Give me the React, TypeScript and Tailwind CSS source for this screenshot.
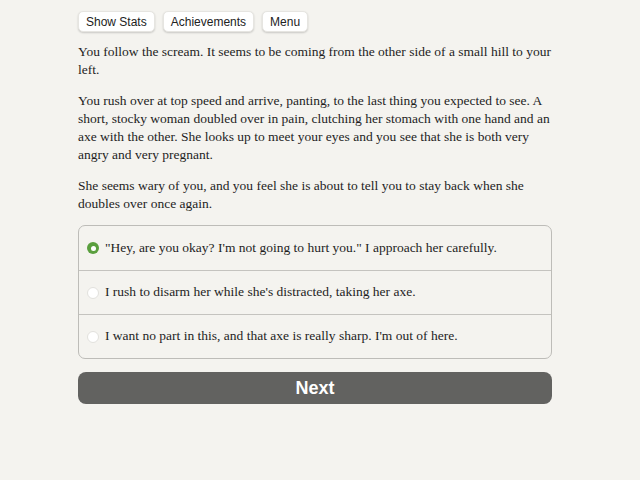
import { useState } from 'react';

const opciones = [
  '"Hey, are you okay? I\'m not going to hurt you." I approach her carefully.',
  "I rush to disarm her while she's distracted, taking her axe.",
  "I want no part in this, and that axe is really sharp. I'm out of here.",
];

const serif = "font-['Liberation_Serif','DejaVu_Serif',serif]";
const sans = "font-['Liberation_Sans',Arial,sans-serif]";

function BotonBarra({ children }: { children: React.ReactNode }) {
  return (
    <button
      className={`${sans} h-[21px] px-[7px] text-[12px] text-[#222] bg-white rounded-[5px] shadow-[0_1px_2px_rgba(0,0,0,0.18)] border border-[#e6e5e1]`}
    >
      {children}
    </button>
  );
}

export default function App() {
  const [elegida, setElegida] = useState(0);

  return (
    <div className="min-h-[480px] w-full bg-[#f4f3ef] text-[#1e1e1e]">
      <div className="pl-[78px] w-[552px] pt-[11px]">
        <div className="flex gap-[8px]">
          <BotonBarra>Show Stats</BotonBarra>
          <BotonBarra>Achievements</BotonBarra>
          <BotonBarra>Menu</BotonBarra>
        </div>

        <div className={`${serif} text-[13.5px] leading-[18px] mt-[11px] whitespace-nowrap`}>
          <p>
            You follow the scream. It seems to be coming from the other side of a small hill to your
            <br />
            left.
          </p>
          <p className="mt-[13px]">
            You rush over at top speed and arrive, panting, to the last thing you expected to see. A
            <br />
            short, stocky woman doubled over in pain, clutching her stomach with one hand and an
            <br />
            axe with the other. She looks up to meet your eyes and you see that she is both very
            <br />
            angry and very pregnant.
          </p>
          <p className="mt-[13px]">
            She seems wary of you, and you feel she is about to tell you to stay back when she
            <br />
            doubles over once again.
          </p>
        </div>

        <div className="mt-[12px] border border-[#bdbcb8] rounded-[7px] overflow-hidden">
          {opciones.map((texto, i) => (
            <label
              key={i}
              onClick={() => setElegida(i)}
              className={`flex items-center h-[44px] pl-[8px] gap-[6px] cursor-pointer ${
                i > 0 ? 'border-t border-[#c4c3bf]' : ''
              }`}
            >
              {elegida === i ? (
                <span className="w-[12px] h-[12px] rounded-full bg-[#5a9f3e] flex items-center justify-center">
                  <span className="w-[5px] h-[5px] rounded-full bg-white" />
                </span>
              ) : (
                <span className="w-[12px] h-[12px] rounded-full bg-white border border-[#e2e1dd]" />
              )}
              <span className={`${serif} text-[13.5px]`}>{texto}</span>
            </label>
          ))}
        </div>

        <button
          className={`${sans} mt-[13px] w-full h-[32px] rounded-[8px] bg-[#626260] text-white text-[18px] font-bold`}
        >
          Next
        </button>
      </div>
    </div>
  );
}
